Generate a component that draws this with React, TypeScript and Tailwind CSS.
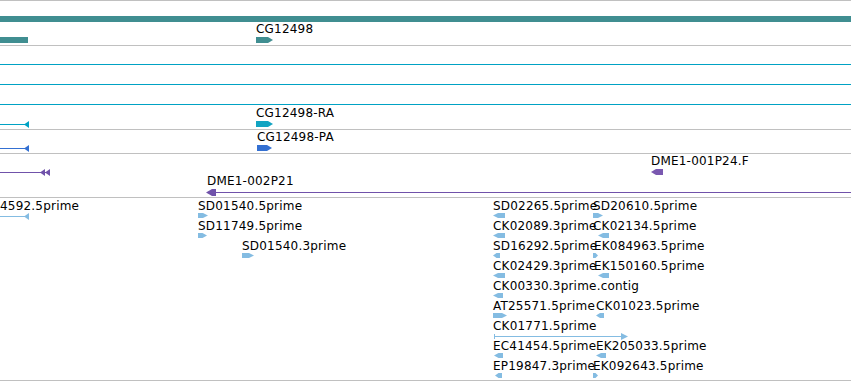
import React from "react";

type Dir = "l" | "r";

function pts(x: number, y: number, w: number, h: number, dir: Dir) {
  const t = Math.min(5, w / 2);
  if (dir === "r")
    return `${x},${y} ${x + w - t},${y} ${x + w},${y + h / 2} ${x + w - t},${y + h} ${x},${y + h}`;
  return `${x + w},${y} ${x + t},${y} ${x},${y + h / 2} ${x + t},${y + h} ${x + w},${y + h}`;
}

const Arrow = ({ x, y, w, h = 5, dir, color }: { x: number; y: number; w: number; h?: number; dir: Dir; color: string }) => (
  <polygon points={pts(x, y, w, h, dir)} fill={color} />
);

const Line = ({ x1, x2, y, color }: { x1: number; x2: number; y: number; color: string }) => (
  <rect x={x1} y={y} width={x2 - x1} height={1} fill={color} shapeRendering="crispEdges" />
);

const T = ({ c, children }: { c: string; children: React.ReactNode }) => (
  <div
    className={`absolute whitespace-nowrap text-[12px] leading-[14px] tracking-[0.2px] text-black font-['DejaVu_Sans',sans-serif] ${c}`}
  >
    {children}
  </div>
);

const Canvas = ({ children }: { children: React.ReactNode }) => (
  <svg className="absolute left-0 top-0 h-full w-full overflow-visible" width={851}>
    {children}
  </svg>
);

const TEAL = "#408e91";
const CYAN = "#00a2c4";
const CYANBOX = "#12a4c2";
const BLUE = "#3470d2";
const PURPLE = "#7052aa";
const PURPLEBOX = "#7a58b0";
const EST = "#84bce2";

export default function App() {
  return (
    <div className="w-[851px] h-[381px] overflow-hidden bg-white">
      {/* Track A */}
      <div className="relative h-[45px] border-t border-[#c0c0c0]">
        <Canvas>
          <rect x={0} y={15} width={851} height={6} fill={TEAL} />
          <rect x={0} y={36} width={28} height={6} fill={TEAL} />
          <Arrow x={256} y={36} w={17} h={6} dir="r" color={TEAL} />
        </Canvas>
        <T c="left-[256px] top-[21px]">CG12498</T>
      </div>

      {/* Track B */}
      <div className="relative h-[84px] border-t border-[#c0c0c0]">
        <Canvas>
          <Line x1={0} x2={851} y={18} color={CYAN} />
          <Line x1={0} x2={851} y={38} color={CYAN} />
          <Line x1={0} x2={851} y={58} color={CYAN} />
          <Line x1={0} x2={29} y={78} color={CYAN} />
          <polygon points="24,78.5 29,75 29,82" fill={CYAN} />
          <Arrow x={256} y={75} w={17} h={6} dir="r" color={CYANBOX} />
        </Canvas>
        <T c="left-[256px] top-[60px]">CG12498-RA</T>
      </div>

      {/* Track C */}
      <div className="relative h-[24px] border-t border-[#c0c0c0]">
        <Canvas>
          <Line x1={0} x2={29} y={18} color={BLUE} />
          <polygon points="24,18.5 29,15 29,22" fill={BLUE} />
          <Arrow x={257} y={15} w={15} h={6} dir="r" color={BLUE} />
        </Canvas>
        <T c="left-[257px] top-[0px]">CG12498-PA</T>
      </div>

      {/* Track D */}
      <div className="relative h-[44px] border-t border-[#c0c0c0]">
        <Canvas>
          <Line x1={0} x2={50} y={18} color={PURPLE} />
          <polygon points="40,18.5 45,15 45,22" fill={PURPLE} />
          <polygon points="45,18.5 50,15 50,22" fill={PURPLE} />
          <Arrow x={651} y={15} w={12} h={6} dir="l" color={PURPLEBOX} />
          <Line x1={207} x2={851} y={38} color={PURPLE} />
          <polygon points="206,38.5 212,35 216,35 216,42 212,42" fill={PURPLE} />
        </Canvas>
        <T c="left-[651px] top-[0px]">DME1-001P24.F</T>
        <T c="left-[207px] top-[20px]">DME1-002P21</T>
      </div>

      {/* Track E */}
      <div className="relative h-[184px] border-y border-[#c0c0c0]">
        <Canvas>
          {/* row 0 */}
          <Line x1={0} x2={29} y={18} color={EST} />
          <polygon points="24,18.5 29,15 29,22" fill={EST} />
          <Arrow x={198} y={15} w={10} dir="r" color={EST} />
          <Arrow x={493} y={15} w={12} dir="l" color={EST} />
          <Arrow x={593} y={15} w={10} dir="r" color={EST} />
          {/* row 1 */}
          <Arrow x={198} y={35} w={9} dir="r" color={EST} />
          <Arrow x={493} y={35} w={12} dir="l" color={EST} />
          <Arrow x={598} y={35} w={11} dir="l" color={EST} />
          {/* row 2 */}
          <Arrow x={242} y={55} w={12} dir="r" color={EST} />
          <Arrow x={493} y={55} w={7} dir="l" color={EST} />
          <Arrow x={593} y={55} w={5} dir="r" color={EST} />
          {/* row 3 */}
          <Arrow x={493} y={75} w={12} dir="l" color={EST} />
          <Arrow x={598} y={75} w={11} dir="l" color={EST} />
          {/* row 4 */}
          <Arrow x={493} y={95} w={10} dir="l" color={EST} />
          {/* row 5 */}
          <Arrow x={493} y={115} w={14} dir="r" color={EST} />
          <Arrow x={596} y={115} w={8} dir="l" color={EST} />
          {/* row 6 */}
          <Line x1={494} x2={626} y={138} color={EST} />
          <rect x={494} y={136} width={1} height={5} fill={EST} />
          <polygon points="621,135 628,138.5 621,142" fill={EST} />
          {/* row 7 */}
          <Arrow x={494} y={155} w={9} dir="l" color={EST} />
          <Arrow x={596} y={155} w={10} dir="l" color={EST} />
          {/* row 8 */}
          <Arrow x={495} y={175} w={7} dir="l" color={EST} />
          <Arrow x={593} y={175} w={5} dir="r" color={EST} />
        </Canvas>
        <T c="left-[0px] top-[1px]">4592.5prime</T>
        <T c="left-[198px] top-[1px]">SD01540.5prime</T>
        <T c="left-[493px] top-[1px]">SD02265.5prime</T>
        <T c="left-[593px] top-[1px]">SD20610.5prime</T>

        <T c="left-[198px] top-[21px]">SD11749.5prime</T>
        <T c="left-[493px] top-[21px]">CK02089.3prime</T>
        <T c="left-[593px] top-[21px]">CK02134.5prime</T>

        <T c="left-[242px] top-[41px]">SD01540.3prime</T>
        <T c="left-[493px] top-[41px]">SD16292.5prime</T>
        <T c="left-[594px] top-[41px]">EK084963.5prime</T>

        <T c="left-[493px] top-[61px]">CK02429.3prime</T>
        <T c="left-[594px] top-[61px]">EK150160.5prime</T>

        <T c="left-[493px] top-[81px]">CK00330.3prime.contig</T>

        <T c="left-[493px] top-[101px]">AT25571.5prime</T>
        <T c="left-[596px] top-[101px]">CK01023.5prime</T>

        <T c="left-[493px] top-[121px]">CK01771.5prime</T>

        <T c="left-[493px] top-[141px]">EC41454.5prime</T>
        <T c="left-[596px] top-[141px]">EK205033.5prime</T>

        <T c="left-[493px] top-[161px]">EP19847.3prime</T>
        <T c="left-[593px] top-[161px]">EK092643.5prime</T>
      </div>
    </div>
  );
}
